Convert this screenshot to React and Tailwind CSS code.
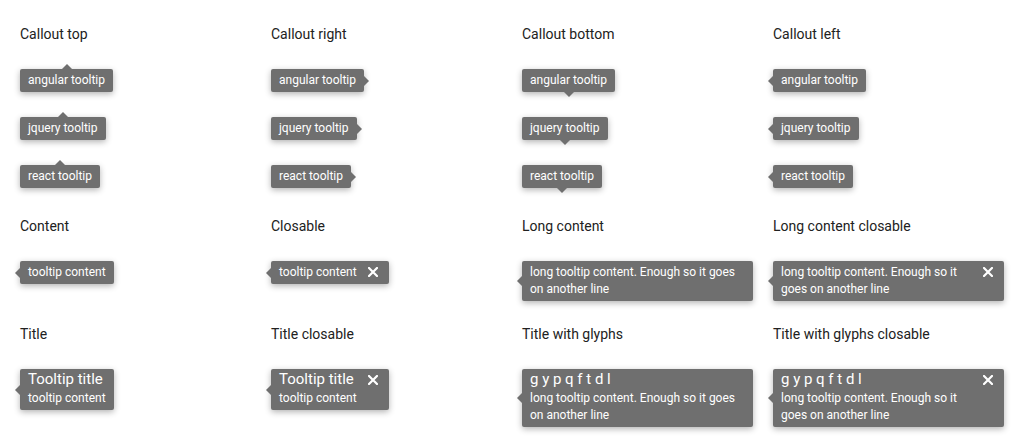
import React from "react";

const BG = "bg-[#6f6f6f]";

function CloseIcon() {
  return (
    <svg width="10" height="10" viewBox="0 0 10 10" className="block">
      <path d="M1 1 L9 9 M9 1 L1 9" stroke="white" strokeWidth="2.2" strokeLinecap="square" />
    </svg>
  );
}

function Arrow({ side }) {
  if (side === "top")
    return (
      <span className="absolute left-1/2 -translate-x-1/2 top-[-5px] w-0 h-0 border-x-[5px] border-x-transparent border-b-[5px] border-b-[#6f6f6f]" />
    );
  if (side === "bottom")
    return (
      <span className="absolute left-1/2 -translate-x-1/2 bottom-[-5px] w-0 h-0 border-x-[5px] border-x-transparent border-t-[5px] border-t-[#6f6f6f]" />
    );
  if (side === "right")
    return (
      <span className="absolute top-1/2 -translate-y-1/2 right-[-5px] w-0 h-0 border-y-[5px] border-y-transparent border-l-[5px] border-l-[#6f6f6f]" />
    );
  return (
    <span className="absolute top-1/2 -translate-y-1/2 left-[-5px] w-0 h-0 border-y-[5px] border-y-transparent border-r-[5px] border-r-[#6f6f6f]" />
  );
}

function Tooltip({ side = "left", title, children, closable, long }) {
  return (
    <div
      className={`relative w-fit ${long ? "max-w-[231px]" : ""} ${BG} rounded-[2px] shadow-[0_2px_6px_rgba(0,0,0,0.3)] text-white pl-[8px] ${
        closable ? "pr-[11px]" : "pr-[8px]"
      } py-[3px] flex items-start`}
    >
      <Arrow side={side} />
      <div className="flex-1 min-w-0">
        {title && <div className="text-[15px] leading-[15px] mb-[3px]">{title}</div>}
        <div className="text-[12px] leading-[17px]">{children}</div>
      </div>
      {closable && (
        <div className="shrink-0 ml-[11px] mt-[3px]">
          <CloseIcon />
        </div>
      )}
    </div>
  );
}

function Heading({ children }) {
  return <div className="text-[14px] leading-[20px] text-[#212121]">{children}</div>;
}

function CalloutCol({ label, side }) {
  return (
    <div>
      <Heading>{label}</Heading>
      <div className="mt-[25px] flex flex-col gap-[25px]">
        <Tooltip side={side}>angular tooltip</Tooltip>
        <Tooltip side={side}>jquery tooltip</Tooltip>
        <Tooltip side={side}>react tooltip</Tooltip>
      </div>
    </div>
  );
}

function Cell({ label, children }) {
  return (
    <div>
      <Heading>{label}</Heading>
      <div className="mt-[25px]">{children}</div>
    </div>
  );
}

const LONG = "long tooltip content. Enough so it goes on another line";

export default function App() {
  return (
    <div
      className="bg-white w-[1024px] h-[447px] overflow-hidden pl-[20px] pt-[24px]"
      style={{ fontFamily: "Roboto, 'Noto Sans', sans-serif" }}
    >
      <div className="grid grid-cols-[251px_251px_251px_251px]">
        <CalloutCol label="Callout top" side="top" />
        <CalloutCol label="Callout right" side="right" />
        <CalloutCol label="Callout bottom" side="bottom" />
        <CalloutCol label="Callout left" side="left" />
      </div>
      <div className="mt-[28px] grid grid-cols-[251px_251px_251px_251px]">
        <Cell label="Content">
          <Tooltip>tooltip content</Tooltip>
        </Cell>
        <Cell label="Closable">
          <Tooltip closable>tooltip content</Tooltip>
        </Cell>
        <Cell label="Long content">
          <Tooltip long>{LONG}</Tooltip>
        </Cell>
        <Cell label="Long content closable">
          <Tooltip long closable>{LONG}</Tooltip>
        </Cell>
      </div>
      <div className="mt-[23px] grid grid-cols-[251px_251px_251px_251px]">
        <Cell label="Title">
          <Tooltip title="Tooltip title">tooltip content</Tooltip>
        </Cell>
        <Cell label="Title closable">
          <Tooltip title="Tooltip title" closable>tooltip content</Tooltip>
        </Cell>
        <Cell label="Title with glyphs">
          <Tooltip title="g y p q f t d l" long>{LONG}</Tooltip>
        </Cell>
        <Cell label="Title with glyphs closable">
          <Tooltip title="g y p q f t d l" long closable>{LONG}</Tooltip>
        </Cell>
      </div>
    </div>
  );
}
